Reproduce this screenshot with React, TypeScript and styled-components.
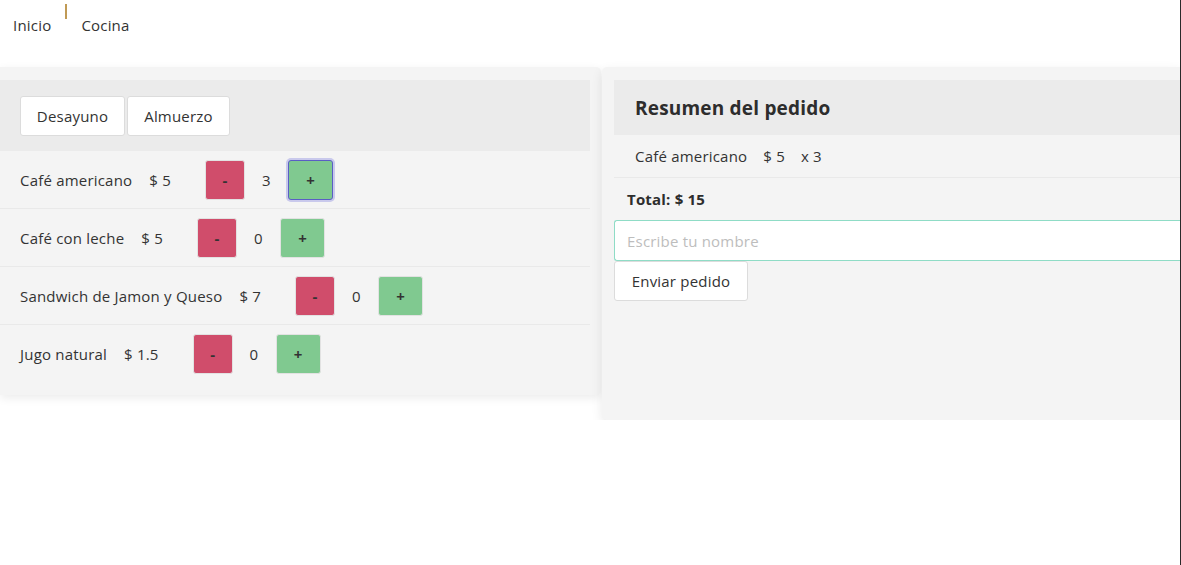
import React from "react";
import styled, { createGlobalStyle } from "styled-components";

const Global = createGlobalStyle`
  html, body { margin: 0; padding: 0; background: #fff; overflow: hidden; }
  body { font-family: "Open Sans", "Noto Sans", sans-serif; color: #333; font-size: 15px; letter-spacing: 0.2px; }
  * { box-sizing: border-box; }
`;

const Nav = styled.nav`
  display: flex;
  align-items: flex-start;
  height: 67px;
  padding: 4px 0 0 13px;
  gap: 14px;
`;
const NavLink = styled.a`
  margin-top: 11px;
  font-size: 15px;
  color: #333;
  text-decoration: none;
  line-height: 20px;
`;
const NavSep = styled.span`
  width: 2px;
  height: 15px;
  background: #c09a55;
`;

const Main = styled.main`
  display: flex;
  align-items: flex-start;
  gap: 1px;
`;

const LeftCard = styled.section`
  flex: none;
  width: 601px;
  min-height: 328px;
  padding: 13px 11px 12px 0;
  background: #f4f4f4;
  border-radius: 0 5px 5px 0;
  box-shadow: 0 3px 10px rgba(0, 0, 0, 0.08);
`;
const RightCard = styled.section`
  flex: 1;
  min-width: 0;
  min-height: 353px;
  padding: 13px 0 12px 12px;
  background: #f4f4f4;
  border-radius: 5px 0 0 5px;
  box-shadow: 0 4px 12px rgba(0, 0, 0, 0.09);
`;

const TabBar = styled.div`
  background: #ebebeb;
  height: 71px;
  padding: 16px 20px 0;
  display: flex;
  gap: 2px;
  align-items: flex-start;
`;
const PlainButton = styled.button<{ $w: number }>`
  width: ${(p) => p.$w}px;
  height: 40px;
  background: #fff;
  border: 1px solid #dcdcdc;
  border-radius: 3px;
  font-family: inherit;
  font-size: 15px;
  letter-spacing: inherit;
  color: #333;
  padding: 0;
`;

const Row = styled.div<{ $last?: boolean }>`
  display: flex;
  align-items: center;
  height: 58px;
  padding-left: 20px;
  border-bottom: ${(p) => (p.$last ? "none" : "1px solid #e9e9e9")};
  gap: 17px;
`;
const Label = styled.span``;
const Price = styled.span`
  margin-right: 17px;
`;
const Qty = styled.span`
  min-width: 9px;
`;
const QtyButton = styled.button<{ $kind: "minus" | "plus"; $focus?: boolean }>`
  width: ${(p) => (p.$kind === "minus" ? 40 : 45)}px;
  height: 40px;
  border-radius: 3px;
  border: 1px solid ${(p) => (p.$focus ? "#5a5fc4" : "#e2e2e2")};
  background: ${(p) => (p.$kind === "minus" ? "#d04d6b" : "#80c990")};
  box-shadow: ${(p) => (p.$focus ? "0 0 0 2px rgba(120,120,220,0.35)" : "none")};
  font-family: inherit;
  font-size: 15px;
  font-weight: 700;
  color: #333;
  padding: 0;
`;

const SummaryHeader = styled.div`
  background: #ebebeb;
  height: 55px;
  padding-left: 21px;
  display: flex;
  align-items: center;
`;
const Title = styled.h2`
  margin: 0;
  font-size: 19px;
  font-weight: 700;
  color: #2d2d2d;
`;
const SummaryItem = styled.div`
  height: 43px;
  display: flex;
  align-items: center;
  gap: 16px;
  padding-left: 21px;
  border-bottom: 1px solid #e9e9e9;
`;
const Total = styled.div`
  height: 42px;
  display: flex;
  align-items: center;
  padding-left: 13px;
  font-weight: 700;
  color: #2d2d2d;
`;
const NameInput = styled.input`
  display: block;
  width: 100%;
  height: 41px;
  border: 1px solid #8fdcc6;
  border-right: none;
  border-radius: 3px 0 0 3px;
  background: #fff;
  padding: 0 12px;
  font-family: inherit;
  font-size: 15px;
  letter-spacing: inherit;
  outline: none;
  &::placeholder { color: #bdbdbd; }
`;
const SendButton = styled(PlainButton)`
  display: block;
`;

const EdgeLine = styled.div`
  position: fixed;
  top: 0;
  right: 0;
  width: 1px;
  height: 100%;
  background: #2a2a2a;
`;

const items = [
  { name: "Café americano", price: "5", qty: 3 },
  { name: "Café con leche", price: "5", qty: 0 },
  { name: "Sandwich de Jamon y Queso", price: "7", qty: 0 },
  { name: "Jugo natural", price: "1.5", qty: 0 },
];

export default function App() {
  return (
    <>
      <Global />
      <Nav>
        <NavLink href="#">Inicio</NavLink>
        <NavSep />
        <NavLink href="#">Cocina</NavLink>
      </Nav>
      <Main>
        <LeftCard>
          <TabBar>
            <PlainButton $w={105}>Desayuno</PlainButton>
            <PlainButton $w={103}>Almuerzo</PlainButton>
          </TabBar>
          {items.map((it, i) => (
            <Row key={it.name} $last={i === items.length - 1}>
              <Label>{it.name}</Label>
              <Price>$ {it.price}</Price>
              <QtyButton $kind="minus">-</QtyButton>
              <Qty>{it.qty}</Qty>
              <QtyButton $kind="plus" $focus={i === 0}>+</QtyButton>
            </Row>
          ))}
        </LeftCard>
        <RightCard>
          <SummaryHeader>
            <Title>Resumen del pedido</Title>
          </SummaryHeader>
          <SummaryItem>
            <span>Café americano</span>
            <span>$ 5</span>
            <span>x 3</span>
          </SummaryItem>
          <Total>Total: $ 15</Total>
          <NameInput placeholder="Escribe tu nombre" />
          <SendButton $w={134}>Enviar pedido</SendButton>
        </RightCard>
      </Main>
      <EdgeLine />
    </>
  );
}
